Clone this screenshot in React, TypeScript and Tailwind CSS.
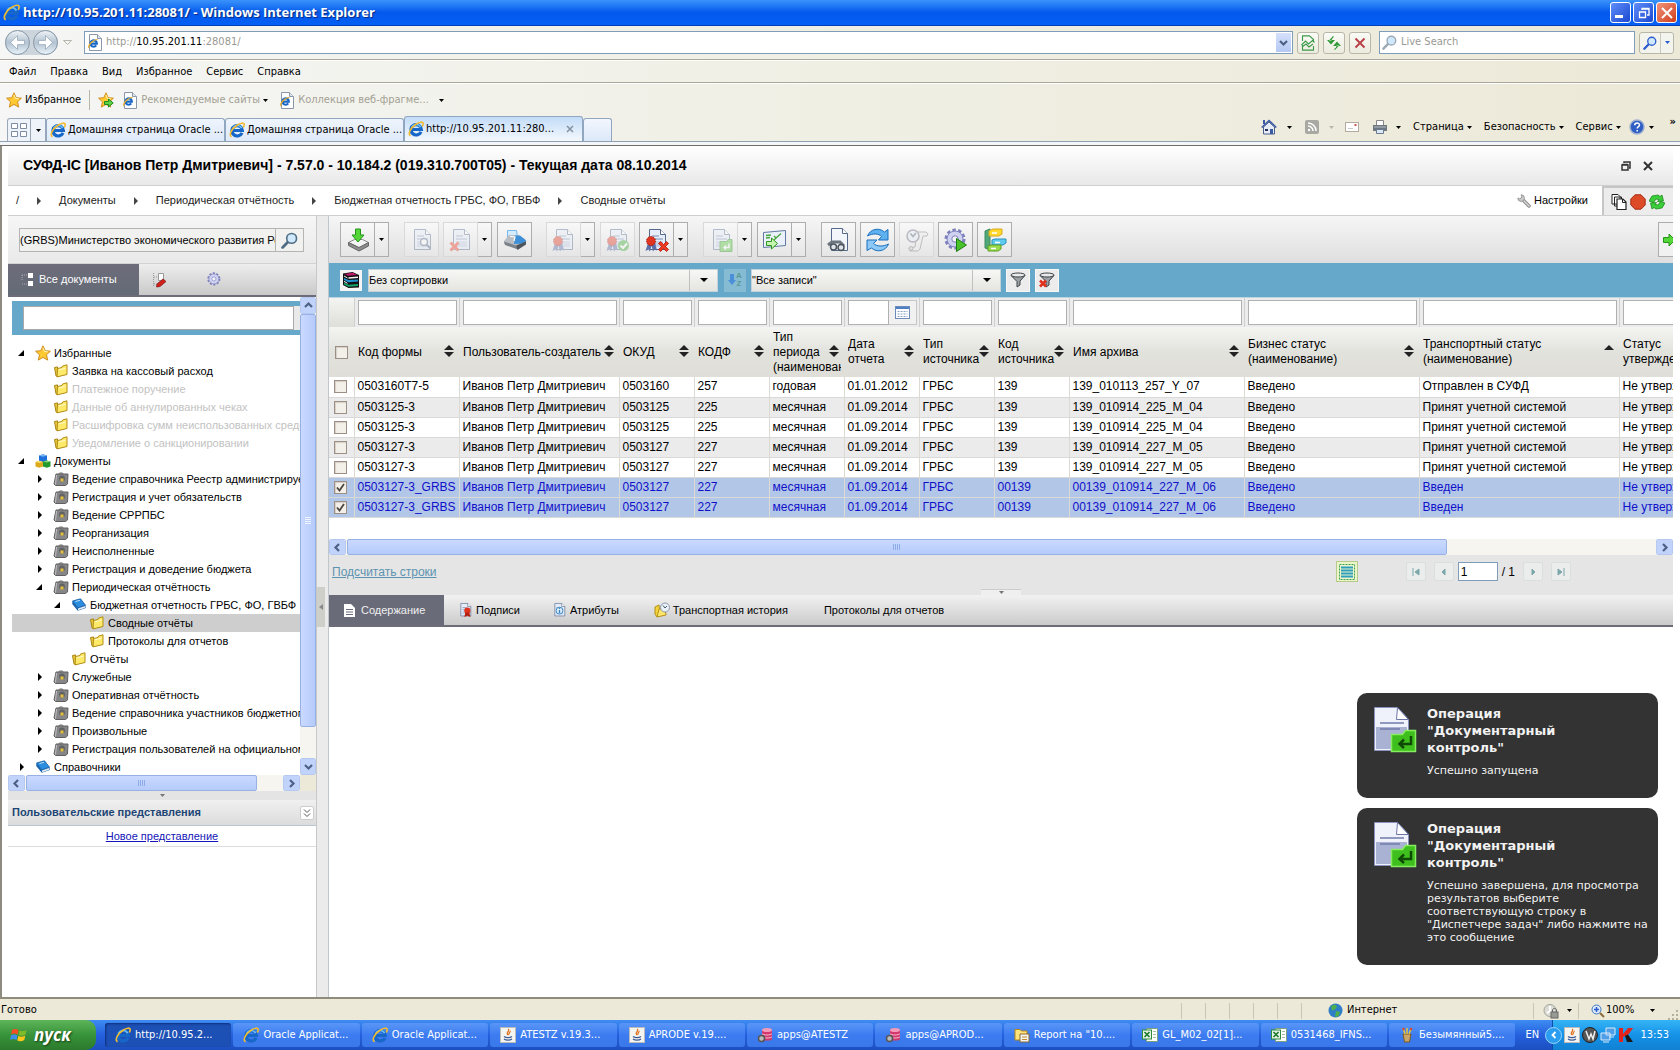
import { useState } from 'react'
import type { ReactNode } from 'react'
import { clsx } from 'clsx'

const ui = "font-['DejaVu_Sans_Condensed','DejaVu_Sans',sans-serif]"

/* ---------- icons ---------- */

function IeIcon({ className = 'w-4 h-4' }: { className?: string }) {
  return (
    <svg viewBox="0 0 16 16" className={clsx('shrink-0', className)} aria-hidden="true">
      <path d="M13 10.800A5.200 5.200 0 1 1 13.400 8.500H4.500" fill="none" stroke="#1767c8" strokeWidth="3.200" />
      <path d="M12.600 6.200A4.800 4.800 0 0 0 3.800 6.500" fill="none" stroke="#6cc1f7" strokeWidth="1.600" />
      <path d="M2.600 14.800C-.8 13.400 2.600 6.600 8 3.200C11.400 1 15.200.2 15.200 2.800c0 .9-.4 1.800-.9 2.700" fill="none" stroke="#f3bb30" strokeWidth="1.600" />
    </svg>
  )
}

function IePage() {
  return (
    <svg viewBox="0 0 16 17" className="w-4 h-[17px] shrink-0" aria-hidden="true">
      <path d="M2.500.5h8l4 4v12h-12z" fill="#fff" stroke="#8b97a8" />
      <path d="M10.500.5v4h4" fill="#dde4ee" stroke="#8b97a8" />
      <path d="M9.200 11.400A3.200 3.200 0 1 1 9.800 9.600H4" fill="none" stroke="#1767c8" strokeWidth="2.200" />
      <path d="M2 14C.5 12 5.500 5.500 10.500 5.500" fill="none" stroke="#e9ae28" strokeWidth="1.200" />
    </svg>
  )
}

function Star({ add = false }: { add?: boolean }) {
  return (
    <svg viewBox="0 0 16 16" className="w-4 h-4 shrink-0" aria-hidden="true">
      <path d="M8 .8l2.200 4.900 5.200.5-3.900 3.600 1.200 5.300L8 12.400l-4.700 2.700 1.200-5.300L.6 6.200l5.200-.5z" fill="#ffc933" stroke="#d08d1e" />
      <path d="M8 2.800l1.400 3.600 3.400.4" fill="none" stroke="#fff4b8" />
      {add && <path d="M6.500 9.500h4v-2.500l4.700 4-4.700 4v-2.500h-4z" fill="#5fd14a" stroke="#1f8a1c" />}
    </svg>
  )
}

function FolderIcon() {
  return (
    <svg viewBox="0 0 16 14" className="w-4 h-3.5 shrink-0" aria-hidden="true">
      <path d="M1.500 3.500l3-.6v9.600l-1.500-.6z" fill="#e8c93a" stroke="#a98614" />
      <path d="M4.500 4.500l4.500-1 .5-1.500 4.500-1.200v9.700L4 12.900z" fill="#ffe968" stroke="#b18d17" />
      <path d="M6 5.800l6.500-1.600" stroke="#fffad0" fill="none" />
    </svg>
  )
}

function CaseIcon() {
  return (
    <svg viewBox="0 0 16 14" className="w-4 h-3.5 shrink-0" aria-hidden="true">
      <path d="M5.500 2.500c0-2 5-2 5 0" fill="none" stroke="#555" />
      <path d="M3 2h12l-.5 10L12.500 13.500H2.500L1 12z" fill="#868688" stroke="#606062" />
      <path d="M3.500 3L2.500 12.500" stroke="#c4c4c6" />
      <circle cx="9" cy="6.500" r="3" fill="#626365" />
      <rect x="7.500" y="6.500" width="3" height="3" fill="#e9c23d" />
    </svg>
  )
}

function BookIcon() {
  return (
    <svg viewBox="0 0 16 14" className="w-4 h-3.5 shrink-0" aria-hidden="true">
      <path d="M1.500 3L9.500.8l5 6.400-7.700 2.600z" fill="#2a8de0" stroke="#12589e" strokeWidth=".8" />
      <path d="M1.500 3l-.3 3 5.600 6.700 8-2.800-.3-2.700-7.700 2.600z" fill="#1763ad" />
      <path d="M6.900 10.600l7.300-2.500v1.600l-7 2.500z" fill="#e4eef8" />
      <path d="M4.500 3.500l4.500-1.200" stroke="#b8defa" />
    </svg>
  )
}

function CubesIcon() {
  return (
    <svg viewBox="0 0 16 14" className="w-4 h-3.5 shrink-0" aria-hidden="true">
      <path d="M4 1.500L8 .3l4 1.200v5.500L8 8.200 4 7z" fill="#1f6fdc" />
      <path d="M4 1.500l4 1.200 4-1.200L8 .3z" fill="#7fb8f5" />
      <path d="M.5 8L4.500 6.800 8 8v4.500l-3.800 1.300L.5 12.500z" fill="#dba91a" />
      <path d="M.5 8l3.700 1.100L8 8 4.500 6.800z" fill="#f8db6a" />
      <path d="M8 7.500l3.800-1.100L15.500 7.500v5l-3.800 1.300L8 12.500z" fill="#259a2c" />
      <path d="M8 7.500l3.700 1.100 3.800-1.100-3.700-1.100z" fill="#86d874" />
    </svg>
  )
}

function Doc({ children, className = 'w-6 h-6' }: { children?: ReactNode; className?: string }) {
  return (
    <svg viewBox="0 0 24 24" className={clsx('shrink-0', className)} aria-hidden="true">
      <path d="M4.500 1.500h11l5 5v15h-16z" fill="#e6edf8" stroke="#54698c" />
      <path d="M15.500 1.500v5h5" fill="#fff" stroke="#54698c" />
      <path d="M7 8h7M7 11h11" stroke="#9aabc9" strokeWidth="1.500" />
      <path d="M7 13h11v6H7z" fill="#c3d0e8" />
      {children}
    </svg>
  )
}

const seal = (
  <>
    <path d="M3 15l-2.500 8 3-1.500 1.500 2 1.500-6 1.500 6 1.500-2 2.500 1-2-8z" fill="#5b6fa8" />
    <circle cx="6" cy="13" r="4.500" fill="#e03420" stroke="#a3170c" strokeDasharray="1.500 1" />
  </>
)
const redX = <path d="M13.500 15.500l2-2 3 3 3-3 2 2-3 3 3 3-2 2-3-3-3 3-2-2 3-3z" fill="#ee3a22" stroke="#b01505" strokeWidth=".8" />

function Gear({ play = false, className = 'w-6 h-6' }: { play?: boolean; className?: string }) {
  return (
    <svg viewBox="0 0 24 24" className={clsx('shrink-0', className)} aria-hidden="true">
      <circle cx="11" cy="11" r="8.500" fill="none" stroke="#7d80bb" strokeWidth="4" strokeDasharray="3.200 2.140" />
      <circle cx="11" cy="11" r="8" fill="#cfd1f0" stroke="#8184bf" />
      <circle cx="11" cy="11" r="3.200" fill="#f4f4fb" stroke="#7d80bb" />
      {play && <path d="M12.500 10.500l10 6.500-10 6.500z" fill="#49c22c" stroke="#1c7d10" />}
    </svg>
  )
}

function Magnifier({ className = 'w-4 h-4', ring = '#6c8fb0' }: { className?: string; ring?: string }) {
  return (
    <svg viewBox="0 0 16 16" className={clsx('shrink-0', className)} aria-hidden="true">
      <path d="M1.500 14.500l5-5" stroke={ring} strokeWidth="2.600" strokeLinecap="round" />
      <circle cx="10" cy="6" r="4.600" fill="#cfe8fb" stroke={ring} strokeWidth="1.500" />
    </svg>
  )
}

function Caret({ className = 'text-black' }: { className?: string }) {
  return (
    <svg viewBox="0 0 5 3" className={clsx('w-[5px] h-[3px] shrink-0', className)} aria-hidden="true">
      <path d="M0 0h5L2.500 3z" fill="currentColor" />
    </svg>
  )
}

function Chevron({ dir }: { dir: 'up' | 'down' | 'left' | 'right' }) {
  const d = { up: 'M1 6l3.500-3.500L8 6', down: 'M1 3l3.500 3.500L8 3', left: 'M6 1L2.500 4.500 6 8', right: 'M3 1l3.500 3.500L3 8' }[dir]
  return (
    <svg viewBox="0 0 9 9" className="w-[9px] h-[9px]" aria-hidden="true">
      <path d={d} fill="none" stroke="#4d6185" strokeWidth="2.200" />
    </svg>
  )
}

function SortMark({ up = false }: { up?: boolean }) {
  return (
    <svg viewBox="0 0 10 14" className="w-2.5 h-3.5" aria-hidden="true">
      <path d="M0 6l5-5 5 5z" fill="#222" />
      {!up && <path d="M0 8l5 5 5-5z" fill="#222" />}
    </svg>
  )
}

const rowIcons = { star: <Star />, folder: <FolderIcon />, case: <CaseIcon />, book: <BookIcon />, cubes: <CubesIcon /> }

/* ---------- data ---------- */

type Node = { level: number; icon: keyof typeof rowIcons; label: string; mark?: 'open' | 'closed'; muted?: boolean; active?: boolean }

const tree: Node[] = [
  { level: 0, icon: 'star', label: 'Избранные', mark: 'open' },
  { level: 1, icon: 'folder', label: 'Заявка на кассовый расход' },
  { level: 1, icon: 'folder', label: 'Платежное поручение', muted: true },
  { level: 1, icon: 'folder', label: 'Данные об аннулированных чеках', muted: true },
  { level: 1, icon: 'folder', label: 'Расшифровка сумм неиспользованных средств', muted: true },
  { level: 1, icon: 'folder', label: 'Уведомление о санкционировании', muted: true },
  { level: 0, icon: 'cubes', label: 'Документы', mark: 'open' },
  { level: 1, icon: 'case', label: 'Ведение справочника Реестр администрируемых', mark: 'closed' },
  { level: 1, icon: 'case', label: 'Регистрация и учет обязательств', mark: 'closed' },
  { level: 1, icon: 'case', label: 'Ведение СРРПБС', mark: 'closed' },
  { level: 1, icon: 'case', label: 'Реорганизация', mark: 'closed' },
  { level: 1, icon: 'case', label: 'Неисполненные', mark: 'closed' },
  { level: 1, icon: 'case', label: 'Регистрация и доведение бюджета', mark: 'closed' },
  { level: 1, icon: 'case', label: 'Периодическая отчётность', mark: 'open' },
  { level: 2, icon: 'book', label: 'Бюджетная отчетность ГРБС, ФО, ГВБФ', mark: 'open' },
  { level: 3, icon: 'folder', label: 'Сводные отчёты', active: true },
  { level: 3, icon: 'folder', label: 'Протоколы для отчетов' },
  { level: 2, icon: 'folder', label: 'Отчёты' },
  { level: 1, icon: 'case', label: 'Служебные', mark: 'closed' },
  { level: 1, icon: 'case', label: 'Оперативная отчётность', mark: 'closed' },
  { level: 1, icon: 'case', label: 'Ведение справочника участников бюджетного', mark: 'closed' },
  { level: 1, icon: 'case', label: 'Произвольные', mark: 'closed' },
  { level: 1, icon: 'case', label: 'Регистрация пользователей на официальном', mark: 'closed' },
  { level: 0, icon: 'book', label: 'Справочники', mark: 'closed' },
]

const indent = ['pl-1', 'pl-[22px]', 'pl-10', 'pl-[58px]']

const columns = [
  { label: 'Код формы', width: 'w-[105px]' },
  { label: 'Пользователь-создатель', width: 'w-40' },
  { label: 'ОКУД', width: 'w-[75px]' },
  { label: 'КОДФ', width: 'w-[75px]' },
  { label: 'Тип\nпериода\n(наименование)', width: 'w-[75px]' },
  { label: 'Дата\nотчета', width: 'w-[75px]', date: true },
  { label: 'Тип\nисточника', width: 'w-[75px]' },
  { label: 'Код\nисточника', width: 'w-[75px]' },
  { label: 'Имя архива', width: 'w-[175px]' },
  { label: 'Бизнес статус\n(наименование)', width: 'w-[175px]' },
  { label: 'Транспортный статус\n(наименование)', width: 'w-[200px]', up: true },
  { label: 'Статус\nутверждения', width: 'w-[105px]' },
]

const user = 'Иванов Петр Дмитриевич'
const accepted = 'Принят учетной системой'
const rows = [
  ['0503160T7-5', user, '0503160', '257', 'годовая', '01.01.2012', 'ГРБС', '139', '139_010113_257_Y_07', 'Введено', 'Отправлен в СУФД', 'Не утвержден'],
  ['0503125-3', user, '0503125', '225', 'месячная', '01.09.2014', 'ГРБС', '139', '139_010914_225_M_04', 'Введено', accepted, 'Не утвержден'],
  ['0503125-3', user, '0503125', '225', 'месячная', '01.09.2014', 'ГРБС', '139', '139_010914_225_M_04', 'Введено', accepted, 'Не утвержден'],
  ['0503127-3', user, '0503127', '227', 'месячная', '01.09.2014', 'ГРБС', '139', '139_010914_227_M_05', 'Введено', accepted, 'Не утвержден'],
  ['0503127-3', user, '0503127', '227', 'месячная', '01.09.2014', 'ГРБС', '139', '139_010914_227_M_05', 'Введено', accepted, 'Не утвержден'],
  ['0503127-3_GRBS', user, '0503127', '227', 'месячная', '01.09.2014', 'ГРБС', '00139', '00139_010914_227_M_06', 'Введено', 'Введен', 'Не утвержден'],
  ['0503127-3_GRBS', user, '0503127', '227', 'месячная', '01.09.2014', 'ГРБС', '00139', '00139_010914_227_M_06', 'Введено', 'Введен', 'Не утвержден'],
]

const toolbar: { label: string; icon: ReactNode; menu?: boolean; off?: boolean; gap: string }[] = [
  {
    label: 'Загрузить', menu: true, gap: 'ml-[11px]',
    icon: (
      <svg viewBox="0 0 24 24" className="w-6 h-6">
        <path d="M2.500 14.500l6-3h8l6 3-9 5.500z" fill="#f4f4f4" stroke="#888" />
        <path d="M2.500 14.500v3l10.500 5.500 9.500-5v-3.500l-9.500 5z" fill="#8c8c8c" stroke="#666" />
        <path d="M9.500 1h5v6h3.500L12 14 6 7h3.500z" fill="#55d638" stroke="#24951a" />
      </svg>
    ),
  },
  { label: 'Просмотр', off: true, gap: 'ml-[15px]', icon: <Doc><circle cx="14" cy="14" r="3.500" fill="#fff" stroke="#54698c" strokeWidth="1.500" /><path d="M16.500 16.500l4 4" stroke="#54698c" strokeWidth="2" /></Doc> },
  { label: 'Удалить', off: true, menu: true, gap: 'ml-1', icon: <Doc><path d="M.5 15.500l2-2 3 3 3-3 2 2-3 3 3 3-2 2-3-3-3 3-2-2 3-3z" fill="#ee3a22" /></Doc> },
  {
    label: 'Печать', gap: 'ml-[5px]',
    icon: (
      <svg viewBox="0 0 24 24" className="w-6 h-6">
        <path d="M4.500 2.500h9l1 7h-10z" fill="#d3ecff" stroke="#77b7ea" />
        <path d="M1 13l5-6 9 0 7 4 1.500 3-9 6-13-4z" fill="#b9bec4" />
        <path d="M11 16l1-8.500 5 0 6 5-1 3z" fill="#3d8fd8" />
        <path d="M1 13.500l12 4 2 4L2 17z" fill="#7b828a" />
        <path d="M13 17.500l10-4v3l-8.500 5.500z" fill="#4f555c" />
        <path d="M7 8.500l5 .5-1 4" fill="none" stroke="#fff" strokeWidth="1.200" />
      </svg>
    ),
  },
  { label: 'Подписать', off: true, menu: true, gap: 'ml-[14px]', icon: <Doc>{seal}</Doc> },
  { label: 'Проверить подпись', off: true, gap: 'ml-[5px]', icon: <Doc>{seal}<circle cx="17.500" cy="17.500" r="5.500" fill="#3fae38" /><path d="M14.500 17.500l2.500 2.500 4-4.500" fill="none" stroke="#fff" strokeWidth="2" /></Doc> },
  { label: 'Удалить подпись', menu: true, gap: 'ml-1', icon: <Doc>{seal}{redX}</Doc> },
  { label: 'Контроль', off: true, menu: true, gap: 'ml-[15px]', icon: <Doc><path d="M11 13.500h7l1-2h4v12H11z" fill="#57c63c" stroke="#2c9420" /><path d="M20 15.500v4h-5m2-2l-2 2 2 2" fill="none" stroke="#fff" strokeWidth="1.500" /></Doc> },
  {
    label: 'Отправить', menu: true, gap: 'ml-[5px]',
    icon: (
      <svg viewBox="0 0 24 24" className="w-6 h-6">
        <path d="M.5 4.500l22-2v15l-22 2z" fill="#eaf1fa" stroke="#6179a3" />
        <path d="M3 7.500l5-.5M3 10l4-.5M11 8l2 2 5-4.500M11 12l2-2" stroke="#49a63d" strokeWidth="1.300" fill="none" />
        <path d="M3.500 13.500h5V10l6 5.500-6 5.500v-3.500h-5z" fill="#c6f5ae" stroke="#2c9420" />
      </svg>
    ),
  },
  { label: 'Найти', gap: 'ml-[15px]', icon: <svg viewBox="0 0 24 24" className="w-6 h-6"><path d="M4.500.5h11l5 5v17h-16z" fill="#f3f7fc" stroke="#54698c" /><path d="M15.500.5v5h5" fill="#fff" stroke="#54698c" /><path d="M1 17l4-3 8 0 4 4" fill="none" stroke="#6d757e" strokeWidth="3" /><circle cx="6.500" cy="19" r="3" fill="#dfe5ea" stroke="#4c545d" strokeWidth="1.500" /><circle cx="14" cy="19.500" r="3" fill="#dfe5ea" stroke="#4c545d" strokeWidth="1.500" /></svg> },
  {
    label: 'Обновить', gap: 'ml-1',
    icon: (
      <svg viewBox="0 0 24 24" className="w-6 h-6">
        <path d="M1.500 8C4 1 13-1 18.500 4L22 1.500V12H12.500l3-3.500C13 5.500 7 5 1.500 8z" fill="#5fb0ee" stroke="#1b6fbd" />
        <path d="M22.500 16C20 23 11 25 5.500 20L1 22.500V12h10l-3.500 3.500c3 3 9.500 3.500 15 .5z" fill="#8cc9f6" stroke="#1b6fbd" />
      </svg>
    ),
  },
  {
    label: 'История', off: true, gap: 'ml-1',
    icon: (
      <svg viewBox="0 0 24 24" className="w-6 h-6">
        <path d="M12 4h9l2 2-1 2h-4l-3 13-2 2H5l-1-3 6-1z" fill="#eee" stroke="#777" />
        <circle cx="8" cy="8" r="6" fill="#e3ebf5" stroke="#667" strokeWidth="1.500" />
        <path d="M5.500 5.500L8 8.500l3-3.500" fill="none" stroke="#456" strokeWidth="1.500" />
        <circle cx="6" cy="20.500" r="2" fill="#ccc" stroke="#777" />
      </svg>
    ),
  },
  { label: 'Диспетчер задач', gap: 'ml-1', icon: <Gear play /> },
  {
    label: 'Архив', gap: 'ml-1',
    icon: (
      <svg viewBox="0 0 24 24" className="w-6 h-6">
        <path d="M2 3l5-2v17l5 2v3l-10-3z" fill="#4fa777" stroke="#3b8a60" />
        <path d="M6 3l4-2h9v5l-3 2H6z" fill="#ffd92e" stroke="#d9a81a" />
        <path d="M9 12l3-1h11v4l-3 2H9z" fill="#5fcbee" stroke="#2a93bb" />
        <path d="M5 18l3-1h10v4l-3 2H5z" fill="#9adb4c" stroke="#5b9f22" />
        <path d="M9 5h5M12 14.500h5M8 20.500h5" stroke="#fff" strokeWidth="1.300" />
      </svg>
    ),
  },
]

/* ---------- browser chrome ---------- */

function TitleBar() {
  return (
    <header className="h-[26px] flex items-center px-[3px] bg-gradient-to-b from-[#3a93fb] via-[#0458ec] to-[#0560f5] border-b border-[#0340b8]">
      <IeIcon className="w-[17px] h-[17px]" />
      <h1 className="ml-[3px] flex-1 text-white text-[13px] font-bold font-['Open_Sans','Noto_Sans',sans-serif] [text-shadow:1px_1px_1px_#0a2a80]">
        http://10.95.201.11:28081/ - Windows Internet Explorer
      </h1>
      <div className="flex gap-0.5">
        <button aria-label="Свернуть" className="w-[21px] h-[21px] rounded-[3px] border border-white bg-gradient-to-br from-[#5f8dfa] to-[#1c47d0] flex items-end p-1">
          <span className="w-2 h-[3px] bg-white" />
        </button>
        <button aria-label="Развернуть" className="w-[21px] h-[21px] rounded-[3px] border border-white bg-gradient-to-br from-[#5f8dfa] to-[#1c47d0] grid place-items-center">
          <svg viewBox="0 0 12 12" className="w-3 h-3"><path d="M4 3V1.500h7V8H9M1.500 5h6v5.500h-6zM1 5h7M4 2h7" fill="none" stroke="#fff" strokeWidth="1.300" /></svg>
        </button>
        <button aria-label="Закрыть" className="w-[21px] h-[21px] rounded-[3px] border border-white bg-gradient-to-br from-[#f0937a] to-[#cf3a12] grid place-items-center">
          <svg viewBox="0 0 12 12" className="w-3 h-3"><path d="M1 1l10 10M11 1L1 11" stroke="#fff" strokeWidth="2" /></svg>
        </button>
      </div>
    </header>
  )
}

function NavButton({ back = false }: { back?: boolean }) {
  return (
    <button aria-label={back ? 'Назад' : 'Вперёд'} className="w-[25px] h-[25px] rounded-full border border-[#8797a6] bg-gradient-to-b from-[#eef2f6] via-[#b3c3d1] to-[#e8f3fa] grid place-items-center">
      <svg viewBox="0 0 16 16" className={clsx('w-[17px] h-[17px]', !back && 'rotate-180')}>
        <path d="M8 1.500L1.500 8 8 14.500V10h6.500V6H8z" fill="#fff" stroke="#8fa2b3" strokeWidth=".7" />
      </svg>
    </button>
  )
}

const chromeBtn = 'w-[22px] h-[22px] rounded-[3px] border border-[#b9b8a8] bg-gradient-to-b from-[#fbfbf7] to-[#ecebdf] grid place-items-center shrink-0'

function AddressRow() {
  return (
    <div className="h-[34px] flex items-center pl-[5px] pr-1.5 border-b border-[#aca899]">
      <div className="flex gap-[3px] rounded-full bg-[#cdd5dc]"><NavButton back /><NavButton /></div>
      <svg viewBox="0 0 9 6" className="w-[9px] h-1.5 ml-[5px] mr-3"><path d="M.5.5h8l-4 4z" fill="none" stroke="#b5b5ad" /></svg>
      <div className="flex-1 h-[23px] bg-white border border-[#7f9db9] flex items-center pl-0.5">
        <IePage />
        <a href="http://10.95.201.11:28081/" className="flex-1 ml-[3px] text-[#9a9a94]">
          http://<span className="text-black">10.95.201.11</span>:28081/
        </a>
        <button aria-label="Журнал адресов" className="w-[15px] h-[19px] mr-px bg-gradient-to-b from-[#d5e0fb] to-[#b5c9f3] grid place-items-center"><Chevron dir="down" /></button>
      </div>
      <div className="flex gap-1 ml-1">
        <button aria-label="Просмотр в режиме совместимости" className={chromeBtn}>
          <svg viewBox="0 0 16 16" className="w-4 h-4"><path d="M2.500 6V.9h7l4 3.600V7M2.500 10v5.100h11V11M1.500 10l4-4 3 3 4-3.500 2 2M2 12l4-3 3 3 4-3" fill="none" stroke="#3a9a4a" strokeWidth="1.100" /></svg>
        </button>
        <button aria-label="Обновить страницу" className={chromeBtn}>
          <svg viewBox="0 0 16 16" className="w-4 h-4"><path d="M7 1L3 5.500h2.500C5.500 4 7 2.500 8 2zM1 5h8L5 9.500zM9 15l4-4.500h-2.500c0 1.500-1 3-2.500 3.500zM15 11H7l4-4.500z" fill="#2f9a36" /></svg>
        </button>
        <button aria-label="Остановить" className={chromeBtn}>
          <svg viewBox="0 0 12 12" className="w-3 h-3"><path d="M1.500 1.500l9 9M10.500 1.500l-9 9" stroke="#b9414a" strokeWidth="2" /></svg>
        </button>
      </div>
      <div className="w-64 h-[23px] ml-2 bg-white border border-[#7f9db9] flex items-center pl-0.5">
        <Magnifier className="w-[15px] h-[17px]" ring="#9aa9b5" />
        <input aria-label="Поиск в Интернете" placeholder="Live Search" className="flex-1 min-w-0 ml-1 outline-none placeholder:text-[#9a9a94]" />
      </div>
      <div className="flex ml-1 h-[22px] rounded-[3px] border border-[#b9b8a8] bg-[#f4f4ee]">
        <button aria-label="Найти" className="w-[21px] grid place-items-center border-r border-[#c9c8ba]"><Magnifier className="w-3.5 h-3.5" ring="#2c5bd0" /></button>
        <button aria-label="Параметры поиска" className="w-3 grid place-items-center"><Caret className="text-[#2c5bd0]" /></button>
      </div>
    </div>
  )
}

function TabLabel({ children, active = false }: { children: string; active?: boolean }) {
  return (
    <button role="tab" aria-selected={active}
      className={clsx('w-[179px] flex items-center gap-0.5 pl-[3px] border border-b-0 border-[#91a7c0] rounded-t-[3px] text-left whitespace-nowrap',
        active ? 'h-[25px] bg-gradient-to-b from-[#c3dcf8] to-[#f4f8fd]' : 'h-[23px] bg-gradient-to-b from-[#eef4fc] to-[#dfeafa]')}>
      <IeIcon />
      <span className="flex-1 truncate">{children}</span>
      {active && <svg viewBox="0 0 8 8" className="w-2 h-2 mr-2"><path d="M1 1l6 6M7 1L1 7" stroke="#8390a0" strokeWidth="1.500" /></svg>}
    </button>
  )
}

function CommandBar() {
  return (
    <div className="ml-auto flex items-center h-[22px] self-start">
      <button aria-label="Домой" className="flex items-center gap-2.5">
        <svg viewBox="0 0 16 16" className="w-4 h-4">
          <path d="M2.500 8v7h11V8L8 3z" fill="#e6ecf6" stroke="#4a5d8c" />
          <path d="M.7 8.500L8 1.500l7.300 7" fill="none" stroke="#3b5ba5" strokeWidth="1.600" />
          <path d="M2 1h2v4H2z" fill="#3b5ba5" />
          <path d="M9 10h3v5H9z" fill="#3b5ba5" /><path d="M4 10h3v2H4z" fill="#27335c" />
        </svg>
        <Caret />
      </button>
      <button aria-label="Веб-каналы" className="flex items-center gap-2.5 ml-[13px]">
        <svg viewBox="0 0 14 14" className="w-3.5 h-3.5">
          <rect width="14" height="14" rx="2" fill="#a9a9a4" />
          <path d="M3 6a5 5 0 0 1 5 5M3 3a8 8 0 0 1 8 8" fill="none" stroke="#fff" strokeWidth="1.500" /><circle cx="4" cy="10" r="1.200" fill="#fff" />
        </svg>
        <Caret className="text-[#b9b8ad]" />
      </button>
      <button aria-label="Почта" className="ml-[11px]">
        <svg viewBox="0 0 14 10" className="w-3.5 h-2.5"><rect x=".5" y=".5" width="13" height="9" fill="#fff" stroke="#b3aaa0" /><path d="M9.500 2h2v2h-2z" fill="#c8544b" /><path d="M3 6.500h5" stroke="#c9c9c9" /></svg>
      </button>
      <button aria-label="Печать страницы" className="flex items-center gap-2 ml-[13px]">
        <svg viewBox="0 0 16 16" className="w-4 h-4">
          <path d="M4.500 1.500h7v5h-7z" fill="#fff" stroke="#888" />
          <path d="M1 6h14v6H1z" fill="#6f7780" /><path d="M2 8h12" stroke="#b8bec5" />
          <path d="M4.500 10.500h7v4h-7z" fill="#dbe8f8" stroke="#6b7a8d" />
        </svg>
        <Caret />
      </button>
      {['Страница', 'Безопасность', 'Сервис'].map((t) => (
        <button key={t} className="flex items-center gap-[3px] ml-3">{t}<Caret /></button>
      ))}
      <button aria-label="Справка" className="flex items-center gap-1 ml-2">
        <svg viewBox="0 0 16 16" className="w-4 h-4">
          <circle cx="8" cy="8" r="7" fill="#2f5fc4" stroke="#9fb0cf" strokeWidth="1.500" />
          <path d="M5.700 6.300c0-3 4.800-3 4.800-.3 0 1.700-2.300 1.500-2.300 3.500M8.200 11v1.500" fill="none" stroke="#fff" strokeWidth="1.500" />
        </svg>
        <Caret />
      </button>
      <button aria-label="Ещё" className="ml-4 mr-1 self-start font-bold leading-3">»</button>
    </div>
  )
}

function BrowserChrome() {
  return (
    <div className="bg-gradient-to-r from-[#f5f6f5] via-[#f0efe4] to-[#ece9d8]">
      <AddressRow />
      <nav className="h-[23px] flex items-center gap-3.5 pl-[9px] pt-0.5 border-t border-t-white border-b border-b-[#aca899]">
        {['Файл', 'Правка', 'Вид', 'Избранное', 'Сервис', 'Справка'].map((m) => <button key={m}>{m}</button>)}
      </nav>
      <div className="h-[33px] flex items-center pl-1.5 border-t border-white">
        <button className="flex items-center gap-[3px]"><Star />Избранное</button>
        <span className="w-px h-5 bg-[#b9b6a6] ml-2 mr-2" />
        <button aria-label="Добавить в избранное"><Star add /></button>
        <button className="flex items-center gap-[3px] ml-2 text-[#a3a193]"><IePage />Рекомендуемые сайты<Caret /></button>
        <button className="flex items-center gap-[3px] ml-[11px] text-[#a3a193]"><IePage />Коллекция веб-фрагме...<span className="w-1" /><Caret /></button>
      </div>
      <div className="h-[25px] flex items-end pl-[7px]" role="tablist">
        <button aria-label="Быстрые вкладки" className="w-6 h-[23px] border border-b-0 border-[#9aa7b8] rounded-tl-[3px] grid place-items-center bg-[#eef3fa]">
          <svg viewBox="0 0 16 14" className="w-4 h-3.5"><path d="M.5.5h6v5h-6zM9.500.5h6v5h-6zM.5 8.500h6v5h-6zM9.500 8.500h6v5h-6z" fill="#fff" stroke="#7d8ca3" /></svg>
        </button>
        <button aria-label="Список вкладок" className="w-[15px] h-[23px] border border-b-0 border-l-0 border-[#9aa7b8] grid place-items-center bg-[#eef3fa]"><Caret /></button>
        <TabLabel>Домашняя страница Oracle ...</TabLabel>
        <TabLabel>Домашняя страница Oracle ...</TabLabel>
        <TabLabel active>http://10.95.201.11:280...</TabLabel>
        <button aria-label="Новая вкладка" className="w-[29px] h-[23px] border border-b-0 border-[#91a7c0] rounded-t-[3px] bg-gradient-to-b from-[#f2f7fd] to-[#dce8f9]" />
        <CommandBar />
      </div>
      <div className="h-[5px] bg-[#f3f6fa] border-t border-t-[#91a0ae] border-b border-b-[#716f64]" />
    </div>
  )
}

/* ---------- scroll bars ---------- */

const scrollBtn = 'grid place-items-center shrink-0 rounded-[2px] border border-white bg-[#c1d3fb] outline outline-1 -outline-offset-1 outline-[#b4c8f0]'

function HScroll({ fill }: { fill: string }) {
  return (
    <div className="h-4 flex bg-[#f6f5ef]">
      <button aria-label="Прокрутить влево" className={clsx(scrollBtn, 'w-[17px]')}><Chevron dir="left" /></button>
      <div className="flex-1 pl-px">
        <div className={clsx('h-full rounded-[2px] border border-[#98b1e4] bg-gradient-to-b from-[#cad9ff] to-[#b5cbfa] flex items-center justify-center gap-px', fill)}>
          {[0, 1, 2, 3].map((n) => <span key={n} className="w-px h-1.5 bg-[#8fabe8]" />)}
        </div>
      </div>
      <button aria-label="Прокрутить вправо" className={clsx(scrollBtn, 'w-[17px]')}><Chevron dir="right" /></button>
    </div>
  )
}

function VScroll() {
  return (
    <div className="w-4 flex flex-col shrink-0 bg-[#f6f5ef]">
      <button aria-label="Прокрутить вверх" className={clsx(scrollBtn, 'h-[17px]')}><Chevron dir="up" /></button>
      <div className="flex-1">
        <div className="h-[93%] rounded-[2px] border border-[#98b1e4] bg-gradient-to-r from-[#cad9ff] to-[#b5cbfa] flex flex-col items-center justify-center gap-px">
          {[0, 1, 2, 3].map((n) => <span key={n} className="h-px w-1.5 bg-[#eef4ff]" />)}
        </div>
      </div>
      <button aria-label="Прокрутить вниз" className={clsx(scrollBtn, 'h-[17px]')}><Chevron dir="down" /></button>
    </div>
  )
}

/* ---------- left panel ---------- */

function TreeRow({ node }: { node: Node }) {
  return (
    <li className={clsx('h-[18px] flex items-center whitespace-nowrap', indent[node.level], node.active && 'bg-[#cecece]', node.muted ? 'text-[#c2c2c2]' : 'text-black')}>
      <span className="w-[19px] shrink-0 flex justify-start pl-0.5">
        {node.mark === 'closed' && <svg viewBox="0 0 4 8" className="w-1 h-2 ml-0.5"><path d="M0 0l4 4-4 4z" /></svg>}
        {node.mark === 'open' && <svg viewBox="0 0 6 6" className="w-1.5 h-1.5"><path d="M6 0v6H0z" /></svg>}
      </span>
      {rowIcons[node.icon]}
      <a href="#" className="ml-[3px]">{node.label}</a>
    </li>
  )
}

function Sidebar() {
  return (
    <aside className="w-[309px] shrink-0 flex flex-col bg-white border-r border-[#c8c8c8] text-[11px]">
      <div className="h-[47px] bg-gradient-to-b from-[#f6f6f6] to-[#e9e9e9] flex items-center pl-[11px] pr-3 pt-px">
        <div className="flex-1 flex h-6 border border-[#b4b4b4] bg-[#f1f1ef]">
          <input aria-label="Организация" defaultValue="(GRBS)Министерство экономического развития Российской Федерации" className="flex-1 min-w-0 border-r border-[#b4b4b4] outline-none" />
          <button aria-label="Выбрать организацию" className="w-[27px] grid place-items-center"><Magnifier className="w-[17px] h-[17px]" ring="#4f6d85" /></button>
        </div>
      </div>
      <div className="h-[34px] flex bg-gradient-to-b from-[#eee] to-[#c9c9c9] border-t border-t-[#d2d2d2] border-b-2 border-b-[#6c6d78]" role="tablist">
        <button role="tab" aria-selected className="w-[131px] bg-gradient-to-b from-[#6d6c7a] to-[#646b76] text-white flex items-center pl-[13px]">
          <svg viewBox="0 0 14 16" className="w-3.5 h-4 mr-1"><path d="M1 3h5M1 8v-5M1 12h5" stroke="#aab" strokeDasharray="1 1" /><path d="M7 1h5v5H7zM7 9h5v5H7z" fill="#fff" /></svg>
          Все документы
        </button>
        <button role="tab" aria-label="Избранные документы" className="w-10 grid place-items-center">
          <svg viewBox="0 0 16 16" className="w-4 h-4"><path d="M2.500 1v13M3 5h4M3 12h4" stroke="#999" strokeDasharray="1 1" /><path d="M7.500 1.500h5v7h-5z" fill="#fff" stroke="#999" /><path d="M6 12l6-5 3 2.500L9 14.500l-3.500.5z" fill="#d3201b" stroke="#7c0d0a" strokeWidth=".7" /></svg>
        </button>
        <button role="tab" aria-label="Настройка дерева" className="w-[70px] grid place-items-center"><Gear className="w-[15px] h-[15px]" /></button>
      </div>

      <div className="flex">
        <div className="flex-1 min-w-0 overflow-hidden pl-1 pt-1">
          <div className="h-[34px] bg-[#66a8c9] flex items-center pl-[11px]">
            <input aria-label="Поиск по дереву" className="flex-1 min-w-0 h-6 bg-white border border-[#a9a9a9] outline-none" />
            <span className="w-1.5 h-6 bg-[#e9e9e9]" />
          </div>
          <ul className="pt-[9px] h-[440px] overflow-hidden">
            {tree.map((n) => <TreeRow key={n.label} node={n} />)}
          </ul>
        </div>
        <VScroll />
      </div>
      <div className="flex">
        <div className="flex-1"><HScroll fill="w-[90%]" /></div>
        <span className="w-4 bg-[#ece9d8]" />
      </div>
      <div className="h-[9px] bg-[#e4e4e4] grid place-items-center"><Caret className="text-[#777]" /></div>
      <div className="h-[26px] flex items-center pl-1 pr-0.5 bg-gradient-to-b from-[#f0f0f0] to-[#dcdcdc] border-b border-[#b9c6cf]">
        <h2 className="flex-1 font-bold text-[#1d4574]">Пользовательские представления</h2>
        <button aria-label="Свернуть панель" className="w-3.5 h-3.5 bg-white border border-[#ccc] rounded-[2px] grid place-items-center">
          <svg viewBox="0 0 8 8" className="w-2 h-2"><path d="M1 .5l3 3 3-3M1 4.500l3 3 3-3" fill="none" stroke="#555" /></svg>
        </button>
      </div>
      <p className="h-[21px] flex items-center justify-center border-b border-[#dcdcdc]">
        <a href="#" className="text-[#1414b8] underline">Новое представление</a>
      </p>
    </aside>
  )
}

/* ---------- right panel ---------- */

function ToolButton({ tool }: { tool: (typeof toolbar)[number] }) {
  const box = 'h-[35px] border bg-gradient-to-b from-[#f8f8f8] to-[#e6e6e6] grid place-items-center'
  return (
    <div className={clsx('flex shrink-0', tool.gap)}>
      <button aria-label={tool.label} disabled={tool.off} className={clsx(box, 'w-[35px]', tool.off ? 'border-[#d9d9d9]' : 'border-[#adadad]')}>
        <span className={tool.off ? 'opacity-40' : ''}>{tool.icon}</span>
      </button>
      {tool.menu && <button aria-label={`${tool.label}: меню`} className={clsx(box, 'w-3.5 border-l-0 border-[#adadad]')}><Caret /></button>}
    </div>
  )
}

function Combo({ label, value, className }: { label: string; value: string; className: string }) {
  return (
    <label className={clsx('flex h-[23px] border border-[#c4d3da] bg-gradient-to-b from-[#f7f7f5] to-[#e4e4e0]', className)}>
      <select aria-label={label} className="flex-1 min-w-0 appearance-none outline-none text-[11px]"><option>{value}</option></select>
      <span className="w-7 border-l border-[#c0c0c0] grid place-items-center pointer-events-none">
        <svg viewBox="0 0 8 4" className="w-2 h-1"><path d="M0 0h8L4 4z" /></svg>
      </span>
    </label>
  )
}

const filterBtn = 'w-6 h-[23px] grid place-items-center bg-[#ececec] border border-[#f7f7f7]'
const funnel = (
  <>
    <path d="M1 3.500l6 6V15l3-2V9l5-5.500z" fill="#9aa0a5" stroke="#3e4448" />
    <ellipse cx="8" cy="3" rx="7" ry="2" fill="#e8eaec" stroke="#3e4448" />
  </>
)

function Check({ on, onChange, label }: { on: boolean; onChange: () => void; label: string }) {
  return (
    <span className="grid place-items-center w-[13px]">
      <input type="checkbox" aria-label={label} checked={on} onChange={onChange} className="[grid-area:1/1] appearance-none w-[13px] h-[13px] border border-[#9c8f86] bg-[#f3efe9] shadow-[inset_1px_1px_1px_#d8cfc6]" />
      {on && <svg viewBox="0 0 9 9" className="[grid-area:1/1] w-[9px] h-[9px] pointer-events-none"><path d="M1 4.500L3.500 7.500 8 1" fill="none" stroke="#4c4540" strokeWidth="1.800" /></svg>}
    </span>
  )
}

function Grid() {
  const [picked, setPicked] = useState([5, 6])
  const toggle = (i: number) => setPicked((p) => (p.includes(i) ? p.filter((n) => n !== i) : [...p, i]))
  return (
    <div className="overflow-hidden bg-white h-[241px]">
      <table className="table-fixed w-[1395px] border-collapse text-[12px]">
        <colgroup>
          <col className="w-[25px]" />
          {columns.map((c) => <col key={c.label} className={c.width} />)}
        </colgroup>
        <thead>
          <tr className="h-[29px] bg-[#ececec]">
            <td className="bg-gradient-to-b from-[#f4f4f2] to-[#dfdfd9]" />
            {columns.map((c) => (
              <td key={c.label} className="p-0 pl-[3px] pr-0.5 border-l border-[#d0d0d0]">
                <div className="flex">
                  <input aria-label={`Фильтр: ${c.label}`} className="flex-1 min-w-0 h-[25px] bg-white border border-[#b0b0b0] outline-none" />
                  {c.date && (
                    <button aria-label="Календарь" className="w-7 h-[25px] border border-l-0 border-[#c6c6c6] bg-[#f1f1f1] grid place-items-center">
                      <svg viewBox="0 0 15 13" className="w-[15px] h-[13px]"><rect x=".5" y=".5" width="14" height="12" fill="#fff" stroke="#6d8bb8" /><path d="M1 2h13" stroke="#4f7fc4" strokeWidth="2" /><path d="M2.500 5.500h10M2.500 8h10M2.500 10.500h10" stroke="#8aa2c6" strokeDasharray="2 1" /></svg>
                    </button>
                  )}
                </div>
              </td>
            ))}
          </tr>
          <tr className="h-[50px] bg-gradient-to-b from-[#f4f4f2] via-[#e2e2dd] to-[#dfded8]">
            <th className="p-0 pl-1.5"><Check on={picked.length === rows.length} onChange={() => setPicked(picked.length === rows.length ? [] : rows.map((_, i) => i))} label="Выбрать все" /></th>
            {columns.map((c) => (
              <th key={c.label} className="relative p-0 pl-1 pr-[3px] text-left font-normal leading-[15px] whitespace-pre">
                <div className="overflow-hidden">{c.label}</div>
                <span className="absolute right-[5px] top-[17px]"><SortMark up={c.up} /></span>
              </th>
            ))}
          </tr>
        </thead>
        <tbody>
          {rows.map((r, i) => {
            const on = picked.includes(i)
            return (
              <tr key={i} className={clsx('h-5 border-b border-[#d9d9d9]', on ? 'bg-[#b2c6e8] text-[#1010c8]' : i % 2 ? 'bg-[#ebebeb]' : 'bg-white')}>
                <td className="p-0 pl-[5px]"><Check on={on} onChange={() => toggle(i)} label={`Строка ${i + 1}`} /></td>
                {r.map((v, n) => <td key={n} className="p-0 pl-[3px] border-l border-[#dcdad2] whitespace-nowrap overflow-hidden leading-[19px]">{v}</td>)}
              </tr>
            )
          })}
        </tbody>
      </table>
    </div>
  )
}

const pageBtn = 'w-5 h-[19px] border border-[#d9dede] bg-[#ebecec] rounded-[2px] grid place-items-center'

function Pager() {
  const icons: [string, string][] = [
    ['Первая страница', 'M2 1v8M8 2v6L4 5z'],
    ['Предыдущая страница', 'M6 2v6L3 5z'],
    ['Следующая страница', 'M4 2v6l3-3z'],
    ['Последняя страница', 'M8 1v8M2 2v6l4-3z'],
  ]
  const btn = ([label, d]: [string, string]) => (
    <button key={label} aria-label={label} className={pageBtn}>
      <svg viewBox="0 0 10 10" className="w-2.5 h-2.5"><path d={d} fill="#7da7aa" stroke="#7da7aa" /></svg>
    </button>
  )
  return (
    <div className="h-[33px] bg-[#e5e5e5] flex items-center pl-[3px] pr-[102px]">
      <a href="#" className="text-[12px] text-[#5c93b0] underline">Подсчитать строки</a>
      <button aria-label="Показать все строки" className="ml-auto mr-12 w-[22px] h-[21px] border border-[#b8c98c] bg-[#eaf5c8] grid place-items-center">
        <svg viewBox="0 0 16 16" className="w-4 h-4"><rect x=".5" y=".5" width="15" height="15" fill="none" stroke="#3f9f5a" strokeDasharray="2 1" /><path d="M2 3.500h12M2 6.500h12M2 9.500h12M2 12.500h12" stroke="#2f9dbd" strokeWidth="2" /></svg>
      </button>
      <div className="flex items-center gap-2">
        {icons.slice(0, 2).map(btn)}
        <span className="flex items-center gap-1 -ml-1 text-[12px]">
          <input aria-label="Номер страницы" defaultValue="1" className="w-10 h-[19px] bg-white border border-[#7f9db9] pl-0.5 outline-none" />/ 1
        </span>
        {icons.slice(2).map(btn)}
      </div>
    </div>
  )
}

const detailTabs = [
  { label: 'Подписи', pad: 'pl-3.5', icon: <Doc className="w-[15px] h-4"><circle cx="15" cy="13" r="5" fill="#e03420" /><path d="M12 16l-2 7 5-2 5 2-2-7z" fill="#b52010" /></Doc> },
  { label: 'Атрибуты', pad: 'pl-8', icon: <Doc className="w-[15px] h-4"><circle cx="12" cy="13" r="5.500" fill="#d8ecfa" stroke="#3c85c0" strokeWidth="1.500" /><path d="M12 12v5M12 8.500v2" stroke="#3c85c0" strokeWidth="2" /></Doc> },
  {
    label: 'Транспортная история', pad: 'pl-[35px]',
    icon: (
      <svg viewBox="0 0 16 16" className="w-4 h-4"><path d="M1 5l4-2 1 9-3 3-2-3z" fill="#f5d33c" stroke="#b1901a" /><path d="M3 15l9-2-1-6H5z" fill="#ffe56a" stroke="#b1901a" /><circle cx="11" cy="5.500" r="4.500" fill="#e9f1fa" stroke="#8b97a8" /><path d="M9 3.500l2 2.500 2-2" fill="none" stroke="#456" /></svg>
    ),
  },
  { label: 'Протоколы для отчетов', pad: 'pl-9', icon: null },
]

function Main() {
  return (
    <main className="flex-1 min-w-0 flex flex-col border-l border-[#c0c6ca] bg-white">
      <div className="h-[47px] flex items-center bg-gradient-to-b from-[#f6f6f6] to-[#dedede] overflow-hidden">
        {toolbar.map((t) => <ToolButton key={t.label} tool={t} />)}
        <button aria-label="Добавить" className="ml-auto w-[15px] h-[35px] border border-r-0 border-[#adadad] bg-[#f1f1f1] overflow-hidden pl-1">
          <svg viewBox="0 0 12 14" className="w-3 h-3.5"><path d="M.5 4.500H6V1l6 6-6 6V9.500H.5z" fill="#55d638" stroke="#24951a" /></svg>
        </button>
      </div>
      <div className="h-[35px] flex items-center bg-[#66a8c9] border-b border-[#bcd4e0] pl-[11px]">
        <button aria-label="Архиватор" className="w-[22px] h-[21px] bg-[#f4f4f4] grid place-items-center mr-1.5">
          <svg viewBox="0 0 16 16" className="w-4 h-4">
            <path d="M0 1.500L9.500 0 16 3v12.500L5.500 16 0 13z" fill="#111" />
            <path d="M1.500 2l8.500-1.200L14 3 5 3.800z" fill="#c0186a" /><path d="M5.500 5.200l9.500-.8v1.500l-9.500.8z" fill="#f4f4f4" />
            <path d="M1 6l4.500 2 9.500-.5v2l-9.500.8L1 8z" fill="#1f8fd0" />
            <path d="M1 10.500l4.500 2.200 9.500-.7v2l-9.500.8L1 12.500z" fill="#14a36a" />
            <path d="M1 4l3.500 2M1 9.300l3.500 2" stroke="#eee" />
          </svg>
        </button>
        <Combo label="Сортировка" value="Без сортировки" className="w-[350px]" />
        <button aria-label="Сортировать" className="w-[22px] h-[23px] ml-1.5 mr-[5px] bg-[#86bbd4] flex items-center justify-center text-[8px] leading-[8px] font-bold text-[#5a9a94]">
          <svg viewBox="0 0 8 12" className="w-2 h-3"><path d="M2 0h4v6h2L4 11 0 6h2z" fill="#4a8fd8" /></svg>
          <span>A<br />Z</span>
        </button>
        <Combo label="Фильтр" value={'"Все записи"'} className="w-[250px]" />
        <button aria-label="Фильтр по условию" className={clsx(filterBtn, 'ml-[5px]')}><svg viewBox="0 0 16 16" className="w-4 h-4">{funnel}</svg></button>
        <button aria-label="Сбросить фильтр" className={clsx(filterBtn, 'ml-[5px]')}>
          <svg viewBox="0 0 16 16" className="w-4 h-4">{funnel}<path d="M1 8.500l6 6M7 8.500l-6 6" stroke="#e0301c" strokeWidth="2.600" /></svg>
        </button>
      </div>
      <Grid />
      <HScroll fill="w-[84%]" />
      <Pager />
      <div className="h-[7px] bg-[#e5e5e5] grid place-items-center"><span className="w-10 h-1.5 bg-[#efefef] border-t border-[#ccc] grid place-items-center"><Caret className="text-[#777]" /></span></div>
      <div className="h-8 flex bg-gradient-to-b from-[#f2f2f2] to-[#cbcbcb] border-b-2 border-[#6c6d78] text-[11px]" role="tablist">
        <button role="tab" aria-selected className="w-[115px] bg-[#6a6b78] text-[#f0f0f0] flex items-center gap-1.5 pl-[15px]">
          <svg viewBox="0 0 11 13" className="w-[11px] h-[13px]"><path d="M0 0h7l4 4v9H0z" fill="#fff" /><path d="M2 5.500h7M2 8h7M2 10.500h7" stroke="#6a6b78" /></svg>
          Содержание
        </button>
        {detailTabs.map((t) => (
          <button key={t.label} role="tab" className={clsx('flex items-center gap-[3px]', t.pad)}>{t.icon}{t.label}</button>
        ))}
      </div>
    </main>
  )
}

/* ---------- application frame ---------- */

const crumbs = ['/', 'Документы', 'Периодическая отчётность', 'Бюджетная отчетность ГРБС, ФО, ГВБФ', 'Сводные отчёты']

function AppHeader() {
  return (
    <>
      <div className="h-10 flex items-center pl-[15px] pr-5 border-b border-[#cfcfcf] bg-gradient-to-b from-white to-[#e8e8e8]">
        <h2 className="flex-1 text-[14px] font-bold">СУФД-IC [Иванов Петр Дмитриевич] - 7.57.0 - 10.184.2 (019.310.700T05) - Текущая дата 08.10.2014</h2>
        <button aria-label="Восстановить окно"><svg viewBox="0 0 10 10" className="w-2.5 h-2.5"><path d="M3 2V1h6v6H8M1 4h6v5H1zM1 3.500h6" fill="none" stroke="#333" strokeWidth="1.500" /></svg></button>
        <button aria-label="Закрыть окно" className="ml-3"><svg viewBox="0 0 10 10" className="w-2.5 h-2.5"><path d="M1 1l8 8M9 1L1 9" stroke="#333" strokeWidth="2" /></svg></button>
      </div>
      <div className="h-[30px] flex items-stretch bg-white border-b border-[#cfcfcf]">
        <ol className="flex-1 flex items-center pl-2 text-[11px]">
          {crumbs.map((c, i) => (
            <li key={c} className="flex items-center">
              {i > 0 && <svg viewBox="0 0 4 8" className="w-1 h-2 mx-[18px]"><path d="M0 0l4 4-4 4z" fill="#444" /></svg>}
              <a href="#" className="text-[#222]">{c}</a>
            </li>
          ))}
        </ol>
        <button className="flex items-center gap-[3px] mr-3.5 text-[11px]">
          <svg viewBox="0 0 14 14" className="w-3.5 h-3.5"><path d="M5 5l7 7" stroke="#8d8d8d" strokeWidth="3.500" strokeLinecap="round" /><path d="M5 5l7 7" stroke="#d8d8d8" strokeWidth="1.500" strokeLinecap="round" /><path d="M.8 4A3.300 3.300 0 1 0 4 .8L5 3 3 5z" fill="#ccc" stroke="#8d8d8d" strokeWidth=".8" /></svg>
          Настройки
        </button>
        <div className="w-[71px] flex items-center gap-[3px] pl-[7px] bg-[#ececec] border-l-2 border-t-2 border-[#c6c6c6]">
          <button aria-label="Окна"><svg viewBox="0 0 16 16" className="w-4 h-4"><path d="M1 .5h6l2 2V10H1zM3.500 3h7v9h-7z" fill="#fff" stroke="#222" /><path d="M6 5h6l3 3v7.500H6z" fill="#fff" stroke="#222" strokeWidth="1.200" /><path d="M11.500 5v3.500H15" fill="none" stroke="#222" /></svg></button>
          <button aria-label="Стоп"><svg viewBox="0 0 16 16" className="w-4 h-4"><path d="M5 .8h6L15.200 5v6L11 15.200H5L.8 11V5z" fill="#dd4a28" stroke="#a52c12" /></svg></button>
          <button aria-label="Перезагрузить"><svg viewBox="0 0 16 16" className="w-4 h-4"><path d="M0 7l3-5 6-1 2 1.500L13 1l1.500 6-6 .5L10 5.500 7 5 4.500 8.500zM16 9l-3 5-6 1-2-1.500L3 15l-1.500-6 6-.5L6 10.500l3 .5 2.500-3.500z" fill="#3ace3a" stroke="#1a8a1a" strokeWidth=".8" /></svg></button>
        </div>
      </div>
    </>
  )
}

function Toast({ text }: { text: string }) {
  return (
    <section role="status" className="w-[301px] rounded-[10px] bg-[#333] text-[#f2f2f2] flex pl-4 pr-2 pt-3 pb-[21px] font-['DejaVu_Sans',sans-serif]">
      <svg viewBox="0 0 44 48" className="w-11 h-12 shrink-0 mr-2.5" aria-hidden="true">
        <path d="M1.500 2.500h23l11 12v31h-34z" fill="#f0f2fb" stroke="#8a93bd" />
        <path d="M3 22h31v22H3z" fill="#a9b2d3" />
        <path d="M24.500 2.500l-1 12h12z" fill="#fff" stroke="#6c76a6" />
        <path d="M7 18h24" stroke="#8f98bf" strokeWidth="2" /><path d="M7 24h20" stroke="#8089b3" strokeWidth="2" />
        <path d="M18.500 29.500h11l3-4h10v21h-24z" fill="#3fbf1e" stroke="#86ec60" strokeWidth="1.500" />
        <path d="M38 31v8H27m4-4.500l-4.500 4.500 4.500 4" fill="none" stroke="#0e4a06" strokeWidth="2.500" />
      </svg>
      <div className="flex-1">
        <h3 className="text-[13px] leading-[17px] font-bold">Операция<br />"Документарный<br />контроль"</h3>
        <p className="mt-2 text-[11px] leading-[13px]">{text}</p>
      </div>
    </section>
  )
}

/* ---------- bottom bars ---------- */

function StatusBar() {
  return (
    <footer className="h-[23px] flex items-center pl-px pt-0.5 bg-[#ece9d8] border-t-2 border-[#8f8c7d]">
      <span className="flex-1">Готово</span>
      {[0, 1, 2, 3, 4, 5].map((n) => <span key={n} className="w-6 h-4 border-l border-[#cac6b4]" />)}
      <svg viewBox="0 0 15 15" className="w-[15px] h-[15px] mr-1 ml-[3px]"><circle cx="7.500" cy="7.500" r="7" fill="#2f7fc8" /><path d="M3 3l4-1.500 2 2-2 3-3 1zM8 8l4 1-1.500 4L7 14z" fill="#4fb04a" /></svg>
      <span className="w-[186px]">Интернет</span>
      <span className="w-2.5 h-4 border-l border-[#cac6b4]" />
      <svg viewBox="0 0 16 16" className="w-4 h-4 mr-2"><circle cx="7" cy="7.500" r="6" fill="#dcdcd6" stroke="#a5a59d" /><path d="M7 3v5l-3 2" fill="none" stroke="#fff" strokeWidth="2" /><rect x="8" y="9" width="7" height="6" fill="#9a9a94" stroke="#666" /><path d="M9.500 9V7c0-2 4-2 4 0v2" fill="none" stroke="#666" /></svg>
      <Caret />
      <span className="h-4 border-l border-[#cac6b4] ml-1.5 mr-3" />
      <svg viewBox="0 0 14 14" className="w-3.5 h-3.5"><circle cx="5.500" cy="5.500" r="4.500" fill="#dcebfa" stroke="#3f78c0" /><path d="M3 5.500h5M5.500 3v5" stroke="#2c5bd0" strokeWidth="1.500" /><path d="M9 9l4 4" stroke="#8a6a3a" strokeWidth="2" /></svg>
      <span className="w-11 ml-px">100%</span>
      <Caret />
      <svg viewBox="0 0 12 12" className="w-3 h-3 ml-3 mr-px self-end"><path d="M10 2v2M6 6v2M10 6v2M2 10v2M6 10v2M10 10v2" stroke="#b5b09a" strokeWidth="2" /></svg>
    </footer>
  )
}

const javaIcon = <svg viewBox="0 0 16 16" className="w-4 h-4 shrink-0"><rect x=".5" y=".5" width="15" height="15" fill="#f4f4f0" stroke="#bbb" /><path d="M8 2c3 2-3 3 0 6M10 4c1 1-2 2-1 4" fill="none" stroke="#e0701c" strokeWidth="1.200" /><path d="M4 9.500c2 1.500 6 1.500 8 0M4 12c2 1.500 6 1.500 8 0" fill="none" stroke="#3c5c98" strokeWidth="1.300" /></svg>
const dbIcon = <svg viewBox="0 0 16 16" className="w-4 h-4 shrink-0"><path d="M5 3v9c0 2 10 2 10 0V3z" fill="#d2386e" /><ellipse cx="10" cy="3" rx="5" ry="2" fill="#f29ab8" /><path d="M5 6.500c1 2 9 2 10 0M5 9.500c1 2 9 2 10 0" fill="none" stroke="#f6bfd0" /><circle cx="4.500" cy="11.500" r="3" fill="#bbb" stroke="#555" strokeWidth="1.500" /></svg>
const openFolder = <svg viewBox="0 0 16 16" className="w-4 h-4 shrink-0"><path d="M1 2.500h5l1.500 1.500H13V13H1z" fill="#ffe27a" stroke="#b5861c" /><path d="M6 7h9v8H6z" fill="#f5f5f5" stroke="#8a6a2a" /><path d="M8 10h5M8 12.500h5" stroke="#c58a2a" /></svg>
const xlsIcon = <svg viewBox="0 0 16 16" className="w-4 h-4 shrink-0"><path d="M4.500 1.500h11v13h-11z" fill="#fff" stroke="#7da07d" /><path d="M11 4.500h3M11 7.500h3M11 10.500h3" stroke="#9bbf9b" /><rect x=".5" y="3" width="9" height="9" fill="#e8f4e8" stroke="#2e8b3a" /><path d="M2.500 5l5 5M7.500 5l-5 5" stroke="#1f7a2c" strokeWidth="1.700" /></svg>
const paintIcon = <svg viewBox="0 0 16 16" className="w-4 h-4 shrink-0"><path d="M4 7h8l-1.500 8h-5z" fill="#c9a468" stroke="#7a5a22" /><path d="M6 7L4 1M8 7V1M10 7l2.500-6" stroke="#e8c23c" strokeWidth="1.500" /><path d="M4 1l1 2M12.500 1l-1 2" stroke="#d8402c" strokeWidth="2" /></svg>

const tasks: [ReactNode, string][] = [
  [<IeIcon />, 'http://10.95.2...'],
  [<IeIcon />, 'Oracle Applicat...'],
  [<IeIcon />, 'Oracle Applicat...'],
  [javaIcon, 'ATESTZ v.19.3...'],
  [javaIcon, 'APRODE v.19....'],
  [dbIcon, 'apps@ATESTZ'],
  [dbIcon, 'apps@APROD...'],
  [openFolder, 'Report на "10....'],
  [xlsIcon, 'GL_M02_02[1]...'],
  [xlsIcon, '0531468_IFNS...'],
  [paintIcon, 'Безымянный5....'],
]

function Taskbar() {
  return (
    <footer className="h-[30px] flex items-stretch text-white bg-gradient-to-b from-[#3f8cf3] via-[#2560de] to-[#1c4fc0]">
      <button className="w-24 flex items-center gap-1.5 pl-2.5 rounded-r-[10px] bg-gradient-to-b from-[#5eb55a] via-[#37933a] to-[#2c7a2c] text-[17px] font-bold italic font-['Open_Sans','Noto_Sans',sans-serif] [text-shadow:1px_1px_2px_#163f14]">
        <svg viewBox="0 0 18 18" className="w-[18px] h-[18px]">
          <path d="M2 4c2-1.500 4-1.500 6.500 0L7.500 8.500C5 7 3 7 1 8.500z" fill="#f25022" /><path d="M9.500 4.500c2 1 4 1 7-.5l-1 4.500c-2.500 1.500-5 1.500-7 .5z" fill="#7fba2a" />
          <path d="M1 9.500c2-1.500 4-1.500 6.500 0L6.500 14c-2.500-1.500-4.500-1.500-6.500 0z" fill="#3f8fea" /><path d="M8.300 10c2 1 4.500 1 7-.5l-1 4.500c-2.500 1.500-5 1.500-7 .5z" fill="#ffc61a" />
        </svg>
        пуск
      </button>
      <div className="flex-1 min-w-0 flex gap-0.5 ml-[9px] py-[3px]">
        {tasks.map(([icon, label], i) => (
          <button key={i} className={clsx('flex-1 min-w-0 flex items-center gap-1 pl-2.5 rounded-[3px] whitespace-nowrap overflow-hidden',
            i === 0 ? 'bg-[#1d50b5] shadow-[inset_1px_1px_2px_#0d2f7c]' : 'bg-gradient-to-b from-[#5a96f7] via-[#3c7cf0] to-[#3a78ea]')}>
            {icon}{label}
          </button>
        ))}
      </div>
      <span className="w-[37px] pl-2.5 self-center">EN</span>
      <div className="flex items-center gap-0.5 pr-[11px] bg-gradient-to-b from-[#35b4f5] via-[#1492e8] to-[#1180d2] border-l border-[#0d4fa8]">
        <button aria-label="Скрытые значки" className="w-[17px] h-[17px] -ml-2 rounded-full bg-[#2a9df0] border border-[#9ad4fb] grid place-items-center">
          <svg viewBox="0 0 8 8" className="w-2 h-2"><path d="M5.500 1l-3 3 3 3" fill="none" stroke="#fff" strokeWidth="1.800" /></svg>
        </button>
        {javaIcon}
        <svg viewBox="0 0 16 16" className="w-4 h-4"><circle cx="8" cy="8" r="7.500" fill="#555" stroke="#222" /><path d="M4 4l3 8 2-5 2 5 2-8" fill="none" stroke="#eee" strokeWidth="1.500" /></svg>
        <svg viewBox="0 0 16 16" className="w-4 h-4"><path d="M6 1h9v7H6zM1 6h9v7H1z" fill="#4f9fe8" stroke="#dbeafa" /><path d="M3 15h6M9 10h5" stroke="#dbeafa" /></svg>
        <svg viewBox="0 0 16 16" className="w-4 h-4"><path d="M1 1h4v14H1z" fill="#e3231c" /><path d="M15 1h-5L5 7v3l5-2z" fill="#e3231c" /><path d="M7 9l3-1.500L15 15H9z" fill="#1a1a1a" /></svg>
        <time className="ml-1">13:53</time>
      </div>
    </footer>
  )
}

export default function App() {
  return (
    <div className={clsx('h-screen flex flex-col overflow-hidden text-[11px] text-black bg-white', ui)}>
      <TitleBar />
      <BrowserChrome />
      <div className="relative flex-1 min-h-0 flex flex-col pl-1.5 pr-[7px] border-l-2 border-[#8d8b80] font-['Liberation_Sans',Arial,sans-serif]">
        <AppHeader />
        <div className="flex-1 min-h-0 flex">
          <Sidebar />
          <div className="w-[11px] shrink-0 bg-[#ebebeb] flex items-center">
            <button aria-label="Свернуть меню" className="w-2 h-10 bg-[#cfcfc9] grid place-items-center">
              <svg viewBox="0 0 4 6" className="w-1 h-1.5"><path d="M4 0v6L0 3z" fill="#888" /></svg>
            </button>
          </div>
          <Main />
        </div>
        <div className="absolute right-[22px] bottom-8 flex flex-col gap-2.5">
          <Toast text="Успешно запущена" />
          <Toast text={'Успешно завершена, для просмотра результатов выберите соответствующую строку в "Диспетчере задач" либо нажмите на это сообщение'} />
        </div>
      </div>
      <StatusBar />
      <Taskbar />
    </div>
  )
}
